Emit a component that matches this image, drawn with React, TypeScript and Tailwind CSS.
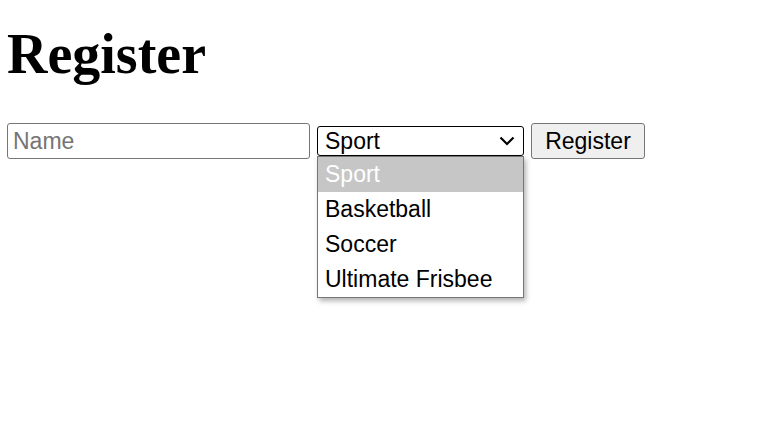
const sports = ["Sport", "Basketball", "Soccer", "Ultimate Frisbee"]

const App = () => {
  return (
    <div className="min-h-screen bg-white pl-[7px] text-black">
      <h1 className="mt-[22px] font-['Liberation_Serif',serif] text-[56px] font-bold leading-[64px]">
        Register
      </h1>

      <form className="mt-[37px] flex items-center gap-[7px] font-['Liberation_Sans',Arial,sans-serif] text-[23px]">
        <input
          type="text"
          placeholder="Name"
          className="h-[36px] w-[303px] rounded-[3px] border border-[#767676] px-[5px] leading-none outline-none placeholder:text-[#757575]"
        />

        {/* select with its open list */}
        <div className="relative">
          <div className="flex h-[30px] w-[207px] items-center justify-between rounded-[3px] border border-black pl-[7px] pr-[8px] leading-none">
            <span>Sport</span>
            <svg width="16" height="10" viewBox="0 0 16 10" fill="none">
              <path d="M1.5 1.5 L8 8 L14.5 1.5" stroke="black" strokeWidth="2.2" />
            </svg>
          </div>
          <ul className="absolute left-0 top-[30px] z-10 w-[207px] border border-[#767676] bg-white shadow-[2px_3px_5px_rgba(0,0,0,0.3)]">
            {sports.map((s, i) => (
              <li
                key={s}
                className={
                  i === 0
                    ? "flex h-[35px] items-center bg-[#c6c6c6] pl-[7px] text-white"
                    : "flex h-[35px] items-center pl-[7px]"
                }
              >
                {s}
              </li>
            ))}
          </ul>
        </div>

        <button
          type="button"
          className="h-[36px] w-[114px] rounded-[3px] border border-[#767676] bg-[#efefef] leading-none"
        >
          Register
        </button>
      </form>
    </div>
  )
}

export default App
